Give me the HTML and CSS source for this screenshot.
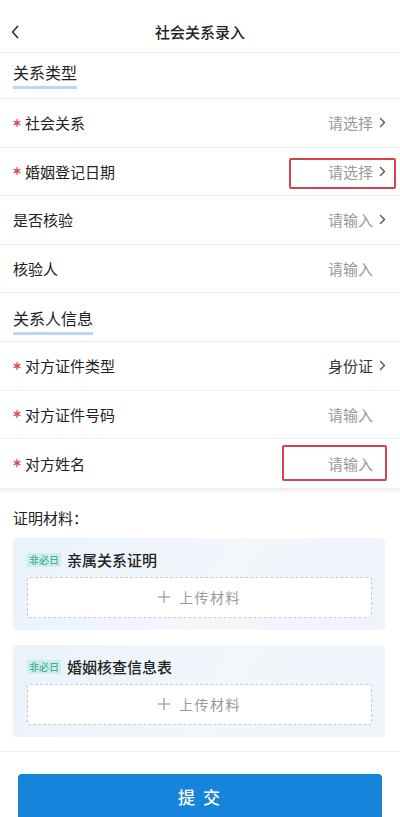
FILE: index.html
```html
<!DOCTYPE html>
<html lang="zh-CN">
<head>
<meta charset="utf-8">
<title>社会关系录入</title>
<link rel="stylesheet" href="styles.css">
</head>
<body>
<div class="page">
  <header class="header">
    <svg class="back" width="10" height="14" viewBox="0 0 10 14"><polyline points="7.5,1.5 2.5,7 7.5,12.5" fill="none" stroke="#333" stroke-width="1.7" stroke-linecap="round" stroke-linejoin="round"/></svg>
    <div class="title">社会关系录入</div>
  </header>

  <div class="section sec1"><span class="sec-text">关系类型</span><span class="sec-line w4"></span></div>

  <div class="row">
    <div class="label"><svg class="req" viewBox="0 0 8 8"><g stroke="#d14b55" stroke-width="1.4" stroke-linecap="round"><line x1="4" y1="0.8" x2="4" y2="7.2"/><line x1="1.2" y1="2.4" x2="6.8" y2="5.6"/><line x1="1.2" y1="5.6" x2="6.8" y2="2.4"/></g></svg>社会关系</div>
    <div class="value">请选择<svg class="chev" viewBox="0 0 7 11"><polyline points="1.5,1.5 5.5,5.5 1.5,9.5" fill="none" stroke="#555" stroke-width="1.4" stroke-linecap="round" stroke-linejoin="round"/></svg></div>
  </div>
  <div class="row">
    <div class="label"><svg class="req" viewBox="0 0 8 8"><g stroke="#d14b55" stroke-width="1.4" stroke-linecap="round"><line x1="4" y1="0.8" x2="4" y2="7.2"/><line x1="1.2" y1="2.4" x2="6.8" y2="5.6"/><line x1="1.2" y1="5.6" x2="6.8" y2="2.4"/></g></svg>婚姻登记日期</div>
    <div class="value">请选择<svg class="chev" viewBox="0 0 7 11"><polyline points="1.5,1.5 5.5,5.5 1.5,9.5" fill="none" stroke="#555" stroke-width="1.4" stroke-linecap="round" stroke-linejoin="round"/></svg></div>
    <div class="mark mark1"></div>
  </div>
  <div class="row">
    <div class="label">是否核验</div>
    <div class="value">请输入<svg class="chev" viewBox="0 0 7 11"><polyline points="1.5,1.5 5.5,5.5 1.5,9.5" fill="none" stroke="#555" stroke-width="1.4" stroke-linecap="round" stroke-linejoin="round"/></svg></div>
  </div>
  <div class="row">
    <div class="label">核验人</div>
    <div class="value">请输入<span class="chev-space"></span></div>
  </div>

  <div class="section sec2"><span class="sec-text">关系人信息</span><span class="sec-line w5"></span></div>

  <div class="row">
    <div class="label"><svg class="req" viewBox="0 0 8 8"><g stroke="#d14b55" stroke-width="1.4" stroke-linecap="round"><line x1="4" y1="0.8" x2="4" y2="7.2"/><line x1="1.2" y1="2.4" x2="6.8" y2="5.6"/><line x1="1.2" y1="5.6" x2="6.8" y2="2.4"/></g></svg>对方证件类型</div>
    <div class="value dark">身份证<svg class="chev" viewBox="0 0 7 11"><polyline points="1.5,1.5 5.5,5.5 1.5,9.5" fill="none" stroke="#555" stroke-width="1.4" stroke-linecap="round" stroke-linejoin="round"/></svg></div>
  </div>
  <div class="row">
    <div class="label"><svg class="req" viewBox="0 0 8 8"><g stroke="#d14b55" stroke-width="1.4" stroke-linecap="round"><line x1="4" y1="0.8" x2="4" y2="7.2"/><line x1="1.2" y1="2.4" x2="6.8" y2="5.6"/><line x1="1.2" y1="5.6" x2="6.8" y2="2.4"/></g></svg>对方证件号码</div>
    <div class="value">请输入<span class="chev-space"></span></div>
  </div>
  <div class="row last">
    <div class="label"><svg class="req" viewBox="0 0 8 8"><g stroke="#d14b55" stroke-width="1.4" stroke-linecap="round"><line x1="4" y1="0.8" x2="4" y2="7.2"/><line x1="1.2" y1="2.4" x2="6.8" y2="5.6"/><line x1="1.2" y1="5.6" x2="6.8" y2="2.4"/></g></svg>对方姓名</div>
    <div class="value">请输入<span class="chev-space"></span></div>
    <div class="mark mark2"></div>
  </div>

  <div class="band"></div>

  <div class="materials">
    <div class="mat-title">证明材料：</div>
    <div class="card">
      <div class="card-head"><span class="tag">非必日</span><span class="card-name">亲属关系证明</span></div>
      <div class="upload"><svg class="plus" viewBox="0 0 12 12"><g stroke="#999" stroke-width="1.2"><line x1="6" y1="0" x2="6" y2="12"/><line x1="0" y1="6" x2="12" y2="6"/></g></svg><span class="upload-text">上传材料</span></div>
    </div>
    <div class="card">
      <div class="card-head"><span class="tag">非必日</span><span class="card-name">婚姻核查信息表</span></div>
      <div class="upload"><svg class="plus" viewBox="0 0 12 12"><g stroke="#999" stroke-width="1.2"><line x1="6" y1="0" x2="6" y2="12"/><line x1="0" y1="6" x2="12" y2="6"/></g></svg><span class="upload-text">上传材料</span></div>
    </div>
  </div>

  <footer class="footer">
    <button class="submit">提 交</button>
  </footer>
</div>
</body>
</html>
```

FILE: styles.css
```css
* { box-sizing: border-box; }
html, body { margin: 0; padding: 0; }
body {
  width: 400px;
  height: 817px;
  overflow: hidden;
  background: #fff;
  font-family: "Noto Sans CJK SC", "Noto Sans", sans-serif;
  color: #222;
}
.page { display: flex; flex-direction: column; }

.header {
  height: 53px;
  padding-top: 12px;
  border-bottom: 1px solid #efefef;
  display: flex;
  align-items: center;
  justify-content: center;
  position: relative;
}
.back { position: absolute; left: 10px; top: 25px; width: 10px; height: 14px; }
.title { font-size: 15px; line-height: 40px; height: 40px; color: #222; font-weight: 500; }

.section {
  display: flex;
  flex-direction: column;
  align-items: flex-start;
  padding-left: 13px;
  border-bottom: 1px solid #efefef;
}
.sec1 { height: 46px; padding-top: 9px; }
.sec2 { height: 49px; padding-top: 15px; }
.sec-text { font-size: 16px; line-height: 20px; color: #222; font-weight: 400; }
.sec-line { height: 3px; margin-top: 4px; background: #bcd6f0; }
.w4 { width: 64px; }
.w5 { width: 80px; }

.row {
  height: 48.5px;
  border-bottom: 1px solid #f0f0f0;
  display: flex;
  align-items: center;
  justify-content: space-between;
  padding: 0 14px 0 13px;
  position: relative;
}
.row.last { border-bottom: none; }
.label { display: flex; align-items: center; font-size: 15px; color: #222; }
.req { width: 8px; height: 8px; margin-right: 4px; }
.value { display: flex; align-items: center; font-size: 15px; color: #999; }
.value.dark { color: #333; }
.chev { width: 7px; height: 11px; margin-left: 6px; }
.chev-space { width: 7px; margin-left: 6px; }

.mark { position: absolute; border: 2px solid #d5434e; border-radius: 2px; }
.mark1 { top: 10px; right: 4px; width: 107px; height: 31px; }
.mark2 { top: 6px; right: 13px; width: 105px; height: 36px; }

.band { height: 6px; background: linear-gradient(#ececec, #f7f7f7 60%, #fff); }

.materials {
  padding: 14px 15px 14px 13px;
  display: flex;
  flex-direction: column;
  gap: 15px;
  border-bottom: 1px solid #eeeeee;
}
.mat-title { font-size: 15px; line-height: 20px; color: #222; margin-bottom: -5px; }
.card {
  height: 92px;
  border-radius: 4px;
  background: linear-gradient(120deg, #eaf2fa 0%, #f2f7fc 55%, #eef4fa 100%);
  padding: 13px 13px 0 14px;
  display: flex;
  flex-direction: column;
}
.card-head { display: flex; align-items: center; height: 18px; }
.tag {
  font-size: 10px;
  line-height: 14px;
  height: 14px;
  padding: 0 2px;
  background: #cdeee9;
  color: #2e9f98;
  border-radius: 1px;
  margin-right: 6px;
}
.card-name { font-size: 15px; color: #222; font-weight: 500; }
.upload {
  margin-top: 8px;
  height: 41px;
  border: 1px dashed #c9c9c9;
  border-radius: 3px;
  background: #fff;
  display: flex;
  align-items: center;
  justify-content: center;
}
.plus { width: 12px; height: 12px; margin-right: 9px; }
.upload-text { font-size: 14px; color: #999; letter-spacing: 1.5px; }

.footer { padding: 22px 18px 0 18px; }
.submit {
  width: 364px;
  height: 46px;
  border: none;
  border-radius: 4px;
  background: #1784dc;
  color: #fff;
  font-family: "Noto Sans CJK SC", "Noto Sans", sans-serif;
  font-size: 17px;
  font-weight: 500;
  letter-spacing: 2px;
}
```
